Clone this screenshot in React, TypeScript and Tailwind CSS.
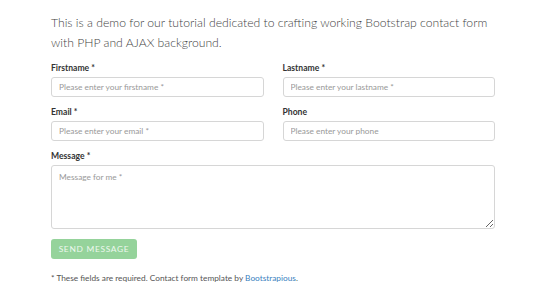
import React from 'react';

const Field = ({ label, placeholder }: { label: string; placeholder: string }) => (
  <div className="flex flex-col">
    <label className="h-[12px] mb-[3px] text-[8.6px] leading-[12px] font-bold text-[#333]">{label}</label>
    <input
      type="text"
      placeholder={placeholder}
      className="h-[20px] w-full px-[7px] border border-[#d6d6d6] rounded-[3px] bg-white text-[8.3px] text-[#555] placeholder:text-[#999] outline-none"
    />
  </div>
);

export default function App() {
  return (
    <div className="min-h-screen bg-white font-['Lato','Liberation_Sans',sans-serif]">
      <div className="w-[444px] ml-[51px] pt-[13px]">
        <p className="text-[12.2px] leading-[19.5px] font-light text-[#3f3f3f]">
          This is a demo for our tutorial dedicated to crafting working Bootstrap contact form with PHP and AJAX background.
        </p>

        <form className="mt-[10px]">
          <div className="grid grid-cols-2 gap-x-[19px] gap-y-[9px]">
            <Field label="Firstname *" placeholder="Please enter your firstname *" />
            <Field label="Lastname *" placeholder="Please enter your lastname *" />
            <Field label="Email *" placeholder="Please enter your email *" />
            <Field label="Phone" placeholder="Please enter your phone" />
          </div>

          <div className="mt-[9px] flex flex-col">
            <label className="h-[12px] mb-[3px] text-[8.6px] leading-[12px] font-bold text-[#333]">Message *</label>
            <textarea
              placeholder="Message for me *"
              className="h-[64px] w-full px-[7px] py-[4px] border border-[#d6d6d6] rounded-[3px] bg-white text-[8.3px] leading-[14px] text-[#555] placeholder:text-[#999] outline-none"
            />
          </div>

          <button
            type="button"
            className="mt-[10px] h-[20px] w-[86px] rounded-[3px] bg-[#95d39b] text-[8.4px] tracking-[0.7px] text-[#eef8ef] uppercase"
          >
            Send message
          </button>

          <p className="mt-[13px] text-[8.3px] leading-[12px] text-[#555]">
            * These fields are required. Contact form template by{' '}
            <a href="#" className="text-[#3a7fc0]">Bootstrapious</a>.
          </p>
        </form>
      </div>
    </div>
  );
}
